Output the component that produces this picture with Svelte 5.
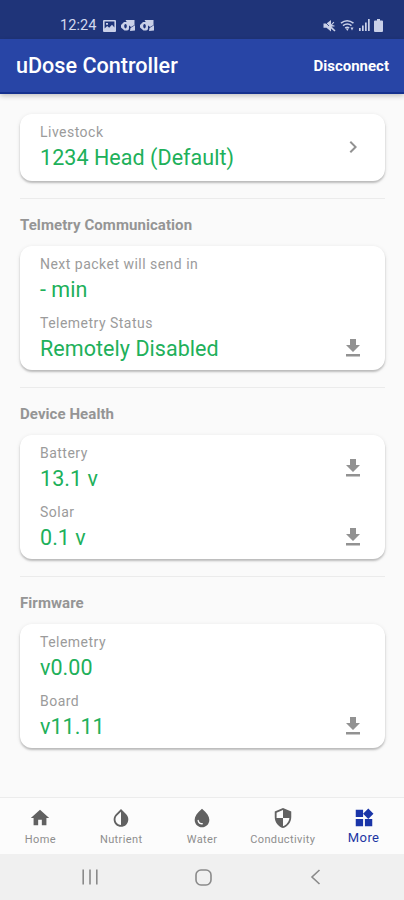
<script lang="ts">
	interface Reading {
		label: string;
		value: string;
		icon?: 'chevron' | 'download';
		iconAlign?: 'center' | 'end';
	}

	interface Section {
		title?: string;
		readings: Reading[];
	}

	const sections: Section[] = [
		{
			readings: [{ label: 'Livestock', value: '1234 Head (Default)', icon: 'chevron' }]
		},
		{
			title: 'Telmetry Communication',
			readings: [
				{ label: 'Next packet will send in', value: '- min' },
				{ label: 'Telemetry Status', value: 'Remotely Disabled', icon: 'download', iconAlign: 'end' }
			]
		},
		{
			title: 'Device Health',
			readings: [
				{ label: 'Battery', value: '13.1 v', icon: 'download' },
				{ label: 'Solar', value: '0.1 v', icon: 'download', iconAlign: 'end' }
			]
		},
		{
			title: 'Firmware',
			readings: [
				{ label: 'Telemetry', value: 'v0.00' },
				{ label: 'Board', value: 'v11.11', icon: 'download', iconAlign: 'end' }
			]
		}
	];

	const icons = {
		chevron: 'M10 6 8.59 7.41 13.17 12l-4.58 4.59L10 18l6-6z',
		download: 'M19 9h-4V3H9v6H5l7 7 7-7zM5 18v2.500h14v-2.500H5z'
	};

	const tabs = [
		{ name: 'Home', path: 'M10 20v-6h4v6h5v-8h3L12 3 2 12h3v8z' },
		{
			name: 'Nutrient',
			path: 'M17.66 7.93 12 2.27 6.34 7.93c-3.12 3.12-3.12 8.19 0 11.31C7.9 20.8 9.95 21.58 12 21.58s4.1-.78 5.66-2.34c3.12-3.12 3.12-8.19 0-11.31zM12 19.59c-1.6 0-3.11-.62-4.24-1.76C6.62 16.69 6 15.19 6 13.59s.62-3.11 1.76-4.24L12 5.1v14.49z'
		},
		{
			name: 'Water',
			path: 'M12 2c-5.33 4.55-8 8.48-8 11.8 0 4.98 3.8 8.2 8 8.2s8-3.22 8-8.2c0-3.32-2.67-7.25-8-11.8zM7.83 14c.37 0 .67.26.74.62.41 2.22 2.28 2.98 3.64 2.87.43-.02.79.32.79.75 0 .4-.32.73-.72.75-2.13.13-4.62-1.09-5.19-4.12-.08-.45.28-.87.74-.87z'
		},
		{
			name: 'Conductivity',
			path: 'M12 1 3 5v6c0 5.55 3.84 10.74 9 12 5.16-1.26 9-6.45 9-12V5l-9-4zm0 10.99h7c-.53 4.12-3.28 7.79-7 8.94V12H5V6.3l7-3.11v8.8z'
		},
		{ name: 'More', path: 'M13 13v8h8v-8h-8zM3 21h8v-8H3v8zM3 3v8h8V3H3zm13.66-1.31L11 7.34 16.66 13l5.66-5.66-5.66-5.65z' }
	];

	let activeTab = $state('More');
</script>

<div class="screen">
	<div class="status-bar">
		<div class="status-left">
			<span class="clock">12:24</span>
			<svg width="13" height="12" viewBox="0 0 13 12">
				<path
					fill-rule="evenodd"
					d="M1 0h11a1 1 0 0 1 1 1v10a1 1 0 0 1-1 1H1a1 1 0 0 1-1-1V1a1 1 0 0 1 1-1zM1.600 1.600v7l2.600-2.600 2 1.800 2.800-3 2.400 2.700V1.600zM3 3h2v1.800H3z"
				/>
			</svg>
			{#each [0, 1] as n (n)}
				<svg width="14" height="12" viewBox="0 0 14 12">
					<path d="M4.500 0h9v5L10 7 7.500 5zM9.500 8l4.500-2.800v5.300L9 11z" />
					<path
						fill-rule="evenodd"
						d="M3 2h3a2 2 0 0 1 2 2v4.500a2 2 0 0 1-2 2H3.500L0 7.500V5zM4.500 4a1.300 2.200 0 1 0 .01 0z"
					/>
				</svg>
			{/each}
		</div>
		<div class="status-right">
			<svg width="13" height="13" viewBox="0 0 13 13">
				<path d="M0.500 4.500h3L8 1v4.500l2.500-2.800.8.800L9 6l2.500.5v1L8.500 7.500l4 4-1 1-3.500-3v3L3.500 8.800h-3z" />
				<path class="cut" d="M1 2l5 5" />
			</svg>
			<svg width="15" height="13" viewBox="0 0 15 13">
				<path class="arc" d="M1 4.200q6-5 12.500 0M3 6.600q4.300-3.300 8.500 0M5.200 9q2.200-1.500 4 0" />
				<path d="M5.800 9.500h3L7.300 12zM10.500 8.500h3l-1.500 3z" />
			</svg>
			<svg width="11" height="12" viewBox="0 0 11 12">
				<path d="M0 9h1.700v3H0zM3 6.500h1.700V12H3zM6 3.500h1.700V12H6zM9 0h1.700v12H9z" />
			</svg>
			<svg width="9" height="13" viewBox="0 0 9 13">
				<path d="M3 0h3v1.500h2a1 1 0 0 1 1 1V12a1 1 0 0 1-1 1H1a1 1 0 0 1-1-1V2.500a1 1 0 0 1 1-1h2z" />
			</svg>
		</div>
	</div>

	<header class="app-bar">
		<h1>uDose Controller</h1>
		<button class="disconnect">Disconnect</button>
	</header>

	<main>
		{#each sections as section}
			<section>
				{#if section.title}
					<h2>{section.title}</h2>
				{/if}
				<div class="card">
					{#each section.readings as reading}
						<div class="reading">
							<div>
								<div class="label">{reading.label}</div>
								<div class="value">{reading.value}</div>
							</div>
							{#if reading.icon}
								<svg
									class="reading-icon"
									class:at-end={reading.iconAlign === 'end'}
									width="24"
									height="24"
									viewBox="0 0 24 24"
								>
									<path d={icons[reading.icon]} />
								</svg>
							{/if}
						</div>
					{/each}
				</div>
			</section>
		{/each}
	</main>

	<nav class="tabs">
		{#each tabs as tab}
			<button class="tab" class:active={tab.name === activeTab} onclick={() => (activeTab = tab.name)}>
				<svg width="22" height="22" viewBox="0 0 24 24"><path d={tab.path} /></svg>
				<span>{tab.name}</span>
			</button>
		{/each}
	</nav>

	<div class="system-nav">
		<svg width="16" height="16" viewBox="0 0 16 16"><path d="M1.200 0.500v15M8 0.500v15M14.800 0.500v15" /></svg>
		<svg width="17" height="17" viewBox="0 0 17 17"><rect x="1" y="1" width="15" height="15" rx="5" /></svg>
		<svg width="16" height="16" viewBox="0 0 16 16"><path d="M11.500 1 4 8l7.500 7" /></svg>
	</div>
</div>

<style>
	:global(body) {
		background: #fafafa;
	}

	.screen {
		display: flex;
		flex-direction: column;
		height: 900px;
		overflow: hidden;
		background: #fafafa;
		font-family: Roboto, 'Liberation Sans', sans-serif;
	}

	button {
		padding: 0;
		border: 0;
		background: none;
		font-family: inherit;
		cursor: pointer;
	}

	/* ── Status bar ── */
	.status-bar {
		display: flex;
		flex-shrink: 0;
		justify-content: space-between;
		height: 39px;
		padding: 12px 21px 0 60px;
		box-sizing: border-box;
		background: #1f3479;
		color: #d3d9ee;
		fill: #c9d0e8;
	}

	.status-left,
	.status-right {
		display: flex;
		align-items: center;
		height: 27px;
	}

	.status-left {
		gap: 5px;
	}

	.clock {
		margin-right: 1px;
		font-size: 14.5px;
		letter-spacing: 0.1px;
	}

	.status-right {
		gap: 4px;
		height: 26px;
	}

	.cut {
		stroke: #1f3479;
		stroke-width: 0.8;
	}

	.arc {
		fill: none;
		stroke: #c9d0e8;
		stroke-width: 1.6;
	}

	/* ── App bar ── */
	.app-bar {
		position: relative;
		display: flex;
		flex-shrink: 0;
		align-items: center;
		justify-content: space-between;
		height: 55px;
		padding: 0 15px 0 16px;
		box-sizing: border-box;
		border-bottom: 2px solid #15318f;
		background: #2845a6;
		box-shadow: 0 2px 5px rgba(0, 0, 0, 0.22);
		color: #fff;
	}

	h1 {
		margin: 0;
		font-size: 21.6px;
		font-weight: 500;
	}

	.disconnect {
		color: #fff;
		font-size: 15px;
		font-weight: 700;
	}

	/* ── Content ── */
	main {
		flex: 1;
		padding: 20px 19px 0 20px;
	}

	section + section {
		margin-top: 17px;
		border-top: 1px solid #ebebeb;
	}

	h2 {
		margin: 0;
		padding: 16px 0 11px;
		color: #959595;
		font-size: 15px;
		font-weight: 700;
		line-height: 20px;
		letter-spacing: 0.07px;
	}

	.card {
		display: flex;
		flex-direction: column;
		gap: 8px;
		padding: 8px 20px 6px;
		border-radius: 12px;
		background: #fff;
		box-shadow:
			0 2px 2px rgba(0, 0, 0, 0.2),
			0 1px 4px rgba(0, 0, 0, 0.1);
	}

	section:first-child .card {
		padding-bottom: 8px;
	}

	.reading {
		display: flex;
		align-items: center;
		justify-content: space-between;
	}

	.label {
		color: #9b9b9b;
		font-size: 14px;
		line-height: 20px;
		letter-spacing: 0.48px;
	}

	.value {
		padding-top: 1px;
		color: #20b05a;
		font-size: 21.5px;
		line-height: 30px;
		letter-spacing: 0.05px;
	}

	.reading-icon {
		margin-bottom: 2px;
		fill: #929292;
	}

	.reading-icon.at-end {
		align-self: flex-end;
		margin-bottom: 4px;
	}

	/* ── Tabs ── */
	.tabs {
		display: grid;
		grid-template-columns: repeat(5, 1fr);
		flex-shrink: 0;
		height: 57px;
		box-sizing: border-box;
		border-top: 1px solid #ececec;
		background: #fcfcfc;
	}

	.tab {
		display: flex;
		flex-direction: column;
		align-items: center;
		padding-top: 9px;
		color: #8e8e8e;
		fill: #616161;
		font-size: 11px;
		line-height: 21px;
		letter-spacing: 0.38px;
	}

	.tab.active {
		color: #1d36a3;
		fill: #1a35a8;
		font-size: 13px;
		line-height: 18px;
	}

	/* ── System navigation ── */
	.system-nav {
		display: flex;
		flex-shrink: 0;
		align-items: center;
		justify-content: space-between;
		height: 46px;
		padding: 0 80px 0 82px;
		background: #f0f0f0;
		fill: none;
		stroke: #8a8a8a;
		stroke-width: 1.6;
	}
</style>
